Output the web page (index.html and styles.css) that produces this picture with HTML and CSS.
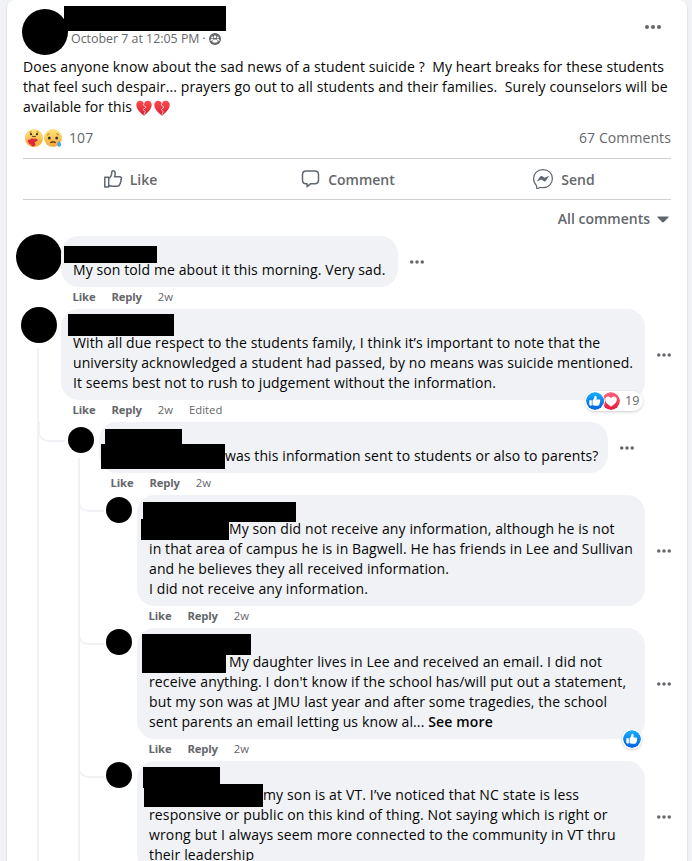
FILE: index.html
```html
<!DOCTYPE html>
<html lang="en">
<head>
  <meta charset="UTF-8">
  <meta name="viewport" content="width=device-width, initial-scale=1.0">
  <title>Group Post</title>
  <link rel="stylesheet" href="styles.css">
</head>
<body>
  <!-- shared icons -->
  <svg class="defs" width="0" height="0">
    <defs>
      <linearGradient id="blue" x1="0" y1="0" x2="0" y2="1">
        <stop offset="0" stop-color="#18afff"/>
        <stop offset="1" stop-color="#0062df"/>
      </linearGradient>
      <linearGradient id="red" x1="0" y1="0" x2="0" y2="1">
        <stop offset="0" stop-color="#ff6680"/>
        <stop offset="1" stop-color="#e61739"/>
      </linearGradient>
      <linearGradient id="heart" x1="0" y1="0" x2="0" y2="1">
        <stop offset="0" stop-color="#ff4a50"/>
        <stop offset="1" stop-color="#d8202f"/>
      </linearGradient>
      <linearGradient id="yellow" x1="0" y1="0" x2="0" y2="1">
        <stop offset="0" stop-color="#ffe67a"/>
        <stop offset="1" stop-color="#f5a73b"/>
      </linearGradient>
      <symbol id="dots" viewBox="0 0 16 4">
        <circle cx="2" cy="2" r="2"/><circle cx="8" cy="2" r="2"/><circle cx="14" cy="2" r="2"/>
      </symbol>
      <symbol id="like-badge" viewBox="0 0 18 18">
        <circle cx="9" cy="9" r="9" fill="url(#blue)"/>
        <path fill="#fff" d="M3.500 8.200h2.300v5.200H4.100c-.5 0-.8-.3-.8-.8V8.700c0-.3.1-.5.2-.5zM6.500 8.300c1.100-.6 1.600-1.600 1.800-2.800.1-1 .3-1.700 1-1.700 1 0 1.500 1 1.400 2.100 0 .6-.2 1.100-.3 1.500h2.700c.8 0 1.300.6 1.200 1.200 0 .3-.2.6-.4.8.4.5.3 1.200-.2 1.600.2.5 0 1-.4 1.300.1.800-.5 1.400-1.400 1.400H9.500c-1.300 0-2.100-.2-3-.7z"/>
      </symbol>
      <symbol id="love-badge" viewBox="0 0 18 18">
        <circle cx="9" cy="9" r="9" fill="url(#red)"/>
        <path fill="#fff" d="M9 14.700C5.200 12.200 3.200 10.300 3.200 7.600c0-1.800 1.300-3 2.900-3 1.300 0 2.300.8 2.900 1.800.6-1 1.600-1.800 2.900-1.800 1.600 0 2.900 1.200 2.900 3 0 2.700-2 4.600-5.800 7.100z"/>
      </symbol>
      <symbol id="broken-heart" viewBox="0 0 16 16">
        <path fill="url(#heart)" d="M7.700 3C6.800 1.300 5.300.5 3.700.7 1.500 1 .1 2.900.3 5.300.6 9.200 4 12.600 8 15.700c4-3.100 7.400-6.500 7.700-10.400.2-2.400-1.200-4.300-3.400-4.600C10.600.5 8.700 1.300 7.700 3z"/>
        <path fill="none" stroke="#ffe9ea" stroke-width=".8" d="M8.800 1.800 7.200 5l2.900 2.200-2.900 2.300 2 2L8 14.800"/>
      </symbol>
    </defs>
  </svg>

  <div class="card">
    <div class="post-header">
      <span class="avatar post-avatar"></span>
      <div class="post-info">
        <span class="name-bar"></span>
        <div class="date">
          <span>October 7 at 12:05 PM</span><span class="sep">·</span>
          <svg width="12" height="12" viewBox="0 0 12 12">
            <circle cx="6" cy="6" r="6" fill="#65676b"/>
            <g fill="#fff">
              <circle cx="3.200" cy="4.600" r="1"/><circle cx="8.800" cy="4.600" r="1"/><circle cx="6" cy="3.800" r="1.300"/>
              <path d="M1.300 7.800c0-1.300.8-1.900 1.900-1.900h5.600c1.100 0 1.900.6 1.900 1.900H8.900c0 1.200-1.200 1.900-2.900 1.900s-2.900-.7-2.900-1.900z"/>
            </g>
            <path d="M3.400 7.900c0-1.100 1-1.700 2.600-1.700s2.600.6 2.600 1.700" fill="none" stroke="#65676b" stroke-width=".7"/>
          </svg>
        </div>
      </div>
      <svg class="post-menu" width="16" height="4"><use href="#dots"/></svg>
    </div>

    <div class="post-text">
      <span class="line">Does anyone know about the sad news of a student suicide ?&nbsp; My heart breaks for these students</span>
      <span class="line">that feel such despair... prayers go out to all students and their families.&nbsp; Surely counselors will be</span>
      <span class="line">available for this <svg class="emoji" width="16" height="16"><use href="#broken-heart"/></svg><svg class="emoji" width="16" height="16"><use href="#broken-heart"/></svg></span>
    </div>

    <div class="stats">
      <svg width="37" height="18" viewBox="0 0 37 18">
        <circle cx="9" cy="9" r="9" fill="url(#yellow)"/>
        <path d="M4.500 3.300 6.500 2.600M11.500 2.600l2 .7" stroke="#a6601c" stroke-width=".9"/>
        <circle cx="6" cy="5.200" r="1.100" fill="#3c2b17"/><circle cx="12" cy="5.200" r="1.100" fill="#3c2b17"/>
        <path d="M7 7c1.300 1 2.700 1 4 0" fill="none" stroke="#4b280e" stroke-width=".9"/>
        <path fill="#dd2840" d="M8 17.600C5 16.800 3.100 14.700 2.700 12.600c-.3-1.700 1.200-2.700 2.600-1.900.8-1.600 2.300-1.700 3.100-.6 1.200-1 3-.8 3.900.2.700.9.300 1.700-.7 2.100l-2.200.8c.8.700 1.300 1.700.8 2.800-.4.900-1.200 1.500-2.200 1.600z"/>
        <path fill="#f7b63d" d="M.6 11.800c1.200-.5 2 .2 2.600 1.400.8 1.300 1.700 2.200 3 2.600l.3 1.700C3.600 16.700 1.300 14.900.6 11.800zM17.600 11.600c-1.200-.8-2.900-.6-4.500.3-1.100.7-2.200 1-3.200 1 .5.900 1.200 1.300 2.100 1.300-.2 1.300-.9 2.500-1.700 3.600 3.600-.6 6.200-2.900 7.300-6.200z"/>
        <circle cx="28" cy="9" r="9" fill="url(#yellow)"/>
        <path d="m22 6.200 2.600-1.700M31.400 4.500 34 6.200" stroke="#b27620" stroke-width="1"/>
        <ellipse cx="24.300" cy="9" rx="1.400" ry="1.600" fill="#30333a"/><ellipse cx="31.700" cy="9" rx="1.400" ry="1.600" fill="#30333a"/>
        <path d="M25.400 14c1.100-1.500 4.100-1.500 5.200 0" fill="none" stroke="#4b280e" stroke-width="1.200"/>
        <path fill="#41a8ea" d="M34.200 11.800c1 1.500 1.900 2.700 1.900 4a1.900 1.900 0 0 1-3.800 0c0-1.300.9-2.500 1.900-4z"/>
      </svg>
      <span class="count">107</span>
      <span class="comments-count">67 Comments</span>
    </div>

    <div class="buttons">
      <div class="button like">
        <svg width="20" height="20" viewBox="0 0 20 20" fill="none" stroke="#606770" stroke-width="1.500" stroke-linejoin="round">
          <path d="M1.800 8.200h3.900v9.700H1.800zM5.700 9.400C8.200 8 8.700 6.200 8.800 3.200c0-1 .4-1.500 1.200-1.500 1.500 0 2.200 1.400 2.200 3 0 1.100-.3 2.200-.7 3.100h5.200c1.400 0 2 1.100 1.700 2.200-.1.500-.4.800-.6 1 .4.700.3 1.700-.4 2.300.2.900-.2 1.600-.8 2-.1 1.400-.9 2-2.300 2h-4.500c-1.600 0-2.700-.4-4.100-1"/>
        </svg>
        <span>Like</span>
      </div>
      <div class="button reply-button">
        <svg width="20" height="20" viewBox="0 0 20 20" fill="none" stroke="#606770" stroke-width="1.500" stroke-linejoin="round">
          <path d="M5.200 2h8.600c2.500 0 3.700 1.300 3.700 3.700v5.200c0 2.500-1.200 3.800-3.700 3.800H9.700l-3.600 3v-3h-.9c-2.500 0-3.700-1.300-3.700-3.800V5.700C1.500 3.300 2.700 2 5.200 2z"/>
        </svg>
        <span>Comment</span>
      </div>
      <div class="button send">
        <svg width="20" height="20" viewBox="0 0 20 20" fill="none" stroke="#606770">
          <path d="M10 .6c5.500 0 9.400 3.900 9.400 9s-3.900 9.100-9.400 9.100c-1.100 0-2-.1-2.900-.4-.9.400-2.200 1.300-3.300 1.200-.5-.9.100-2.200-.4-3C1.600 14.800.6 12.500.6 9.600.6 4.500 4.500.6 10 .6z" stroke-width="1.200"/>
          <path d="m3.800 12.500 3.300-4.900c.6-.8 1.600-.9 2.300-.4l2.200 1.600 4.600-2-3.300 4.900c-.6.8-1.600.9-2.300.4l-2.200-1.600z" fill="#606770" stroke="none"/>
        </svg>
        <span>Send</span>
      </div>
    </div>

    <div class="sort">
      <span>All comments</span>
      <svg width="12" height="7" viewBox="0 0 12 7"><path d="M1 .5h10c.7 0 .9.6.4 1.100L7 6c-.6.600-1.400.600-2 0L.6 1.600C.1 1.100.3.500 1 .500z" fill="#606770"/></svg>
    </div>

    <div class="comments">
      <div class="comment">
        <span class="avatar avatar-xl"></span>
        <div class="body">
          <div class="row">
            <div class="bubble w337">
              <span class="bar bar-1"></span>
              <span class="line">My son told me about it this morning. Very sad.</span>
            </div>
            <svg class="menu" width="14" height="4"><use href="#dots"/></svg>
          </div>
          <div class="actions"><b>Like</b><b>Reply</b><span>2w</span></div>
        </div>
      </div>

      <div class="comment has-replies">
        <span class="avatar avatar-lg"></span>
        <div class="body">
          <div class="row">
            <div class="bubble w584">
              <span class="bar bar-2"></span>
              <span class="line">With all due respect to the students family, I think it’s important to note that the</span>
              <span class="line">university acknowledged a student had passed, by no means was suicide mentioned.</span>
              <span class="line">It seems best not to rush to judgement without the information.</span>
              <div class="reactions">
                <svg width="18" height="18"><use href="#like-badge"/></svg>
                <svg class="under" width="18" height="18"><use href="#love-badge"/></svg>
                <span>19</span>
              </div>
            </div>
            <svg class="menu" width="14" height="4"><use href="#dots"/></svg>
          </div>
          <div class="actions"><b>Like</b><b>Reply</b><span>2w</span><span>Edited</span></div>

          <div class="comment reply has-replies">
            <span class="avatar"></span>
            <div class="body">
              <div class="row">
                <div class="bubble w509">
                  <span class="bar bar-3a"></span><span class="bar bar-3b"></span>
                  <span class="line tag-3">was this information sent to students or also to parents?</span>
                </div>
                <svg class="menu" width="14" height="4"><use href="#dots"/></svg>
              </div>
              <div class="actions"><b>Like</b><b>Reply</b><span>2w</span></div>

              <div class="comment reply">
                <span class="avatar"></span>
                <div class="body">
                  <div class="row">
                    <div class="bubble w508">
                      <span class="bar bar-4a"></span><span class="bar bar-4b"></span>
                      <span class="line tag-4">My son did not receive any information, although he is not</span>
                      <span class="line">in that area of campus he is in Bagwell. He has friends in Lee and Sullivan</span>
                      <span class="line">and he believes they all received information.</span>
                      <span class="line">I did not receive any information.</span>
                    </div>
                    <svg class="menu" width="14" height="4"><use href="#dots"/></svg>
                  </div>
                  <div class="actions"><b>Like</b><b>Reply</b><span>2w</span></div>
                </div>
              </div>

              <div class="comment reply">
                <span class="avatar"></span>
                <div class="body">
                  <div class="row">
                    <div class="bubble w508 loose">
                      <span class="bar bar-5a"></span><span class="bar bar-5b"></span>
                      <span class="line tag-4">My daughter lives in Lee and received an email. I did not</span>
                      <span class="line">receive anything. I don't know if the school has/will put out a statement,</span>
                      <span class="line">but my son was at JMU last year and after some tragedies, the school</span>
                      <span class="line">sent parents an email letting us know al... <b>See more</b></span>
                      <div class="reactions single">
                        <svg width="18" height="18"><use href="#like-badge"/></svg>
                      </div>
                    </div>
                    <svg class="menu" width="14" height="4"><use href="#dots"/></svg>
                  </div>
                  <div class="actions"><b>Like</b><b>Reply</b><span>2w</span></div>
                </div>
              </div>

              <div class="comment reply">
                <span class="avatar"></span>
                <div class="body">
                  <div class="row">
                    <div class="bubble w508 loose">
                      <span class="bar bar-6a"></span><span class="bar bar-6b"></span>
                      <span class="line tag-6">my son is at VT. I’ve noticed that NC state is less</span>
                      <span class="line">responsive or public on this kind of thing. Not saying which is right or</span>
                      <span class="line">wrong but I always seem more connected to the community in VT thru</span>
                      <span class="line">their leadership</span>
                    </div>
                    <svg class="menu" width="14" height="4"><use href="#dots"/></svg>
                  </div>
                </div>
              </div>
            </div>
          </div>
        </div>
      </div>
    </div>
  </div>
</body>
</html>
```
FILE: styles.css
```css
* {
  box-sizing: border-box;
}
html, body {
  height: 861px;
  overflow: hidden;
}
body {
  margin: 0;
  background: #f0f2f5;
  font-family: "Open Sans", "Noto Sans", sans-serif;
  font-size: 14px;
  line-height: 20px;
  color: #050505;
}
svg {
  display: block;
  flex-shrink: 0;
}
.defs {
  position: absolute;
}
.card {
  width: 680px;
  height: 861px;
  margin-left: 7px;
  padding: 6px 16px 0;
  background: #fff;
  border-radius: 8px 8px 0 0;
  box-shadow: 0 1px 2px rgba(0,0,0,0.2);
}
.line {
  display: block;
  white-space: nowrap;
  letter-spacing: 0.1px;
}
.loose .line {
  letter-spacing: 0.135px;
}
b {
  font-weight: 600;
}

/* post */
.post-header {
  display: flex;
  height: 51px;
}
.avatar {
  flex-shrink: 0;
  width: 26px;
  height: 26px;
  border-radius: 50%;
  background: #000;
}
.post-avatar {
  width: 46px;
  height: 46px;
  margin: 3px 0 0 -1px;
}
.post-info {
  flex: 1;
  margin-left: -4px;
}
.name-bar {
  display: block;
  width: 162px;
  height: 25px;
  background: #000;
}
.date {
  display: flex;
  align-items: center;
  height: 16px;
  padding-left: 7px;
  font-size: 12.4px;
  color: #65676b;
}
.sep {
  width: 9px;
  text-align: center;
}
.post-menu {
  margin: 19px 10px 0 0;
  fill: #65676b;
}
.post-text {
  height: 60px;
}
.emoji {
  display: inline-block;
  vertical-align: -4px;
  margin-right: 2px;
}
.stats {
  display: flex;
  align-items: center;
  height: 41px;
  padding-left: 2px;
  letter-spacing: 0.1px;
  color: #65676b;
}
.count {
  margin-left: 7px;
}
.comments-count {
  margin-left: auto;
}
.buttons {
  display: flex;
  height: 42px;
  border-top: 1px solid #ced0d4;
  border-bottom: 1px solid #ced0d4;
}
.button {
  flex: 1;
  display: flex;
  align-items: center;
  justify-content: center;
  gap: 7px;
  padding-top: 1px;
  font-weight: 600;
  color: #65676b;
}
.like {
  padding-right: 4px;
}
.reply-button {
  padding-right: 2px;
}
.send {
  gap: 8px;
}
.button svg {
  margin-top: -1px;
}
.sort {
  display: flex;
  align-items: center;
  justify-content: flex-end;
  gap: 7px;
  height: 36px;
  padding: 2px 2px 0 0;
  font-weight: 600;
  color: #65676b;
}

/* comments */
.comment {
  display: flex;
  position: relative;
}
.body {
  flex: 1;
  min-width: 0;
}
.row {
  display: flex;
  align-items: center;
}
.comments > .comment > .body {
  margin-left: 4px;
}
.avatar-xl {
  width: 46px;
  height: 46px;
  margin: -2px -5px 0 -7px;
}
.avatar-lg {
  width: 36px;
  height: 36px;
  margin: -2px 0 0 -2px;
}
.bubble {
  position: relative;
  padding: 24px 12px 7px;
  background: #f0f2f5;
  border-radius: 18px;
}
.w337 { width: 337px; }
.w584 { width: 584px; }
.w509 { width: 509px; }
.w508 { width: 508px; }
.menu {
  margin-left: 12px;
  fill: #65676b;
}
.actions {
  display: flex;
  gap: 16px;
  height: 22px;
  padding-left: 11.5px;
  font-size: 11.3px;
  color: #65676b;
}
.actions b {
  font-weight: 700;
  letter-spacing: -0.15px;
}

/* covered names */
.bar {
  position: absolute;
  background: #000;
}
.bar-1 { left: 3px; top: 10px; width: 93px; height: 17px; }
.bar-2 { left: 7px; top: 5px; width: 106px; height: 22px; }
.bar-3a { left: 6px; top: 7px; width: 77px; height: 16px; }
.bar-3b { left: 2px; top: 22px; width: 124px; height: 25px; }
.bar-4a { left: 6px; top: 7px; width: 153px; height: 20px; }
.bar-4b { left: 4px; top: 24px; width: 88px; height: 21px; }
.bar-5a { left: 5px; top: 6px; width: 109px; height: 21px; }
.bar-5b { left: 5px; top: 26px; width: 84px; height: 19px; }
.bar-6a { left: 6px; top: 6px; width: 77px; height: 21px; }
.bar-6b { left: 7px; top: 23px; width: 119px; height: 23px; }
.tag-3 { padding-left: 114px; }
.tag-4 { padding-left: 80px; }
.tag-6 { padding-left: 114px; }

/* replies and thread lines */
.reply {
  margin-left: 7px;
}
.reply > .avatar {
  margin-top: 5px;
}
.reply > .body {
  margin-left: 5px;
}
.reply .reply > .avatar {
  margin-top: 1px;
}
.reply .actions + .reply > .avatar {
  margin-top: 2px;
}
.has-replies::before {
  content: "";
  position: absolute;
  left: 14px;
  top: 39px;
  width: 2px;
  height: 900px;
  background: #f0f2f5;
}
.reply.has-replies::before {
  left: 10px;
  top: 36px;
}
.reply::after {
  content: "";
  position: absolute;
  left: -30px;
  top: 0;
  width: 25px;
  height: 18px;
  border-left: 2px solid #f0f2f5;
  border-bottom: 2px solid #f0f2f5;
  border-bottom-left-radius: 10px;
}
.reply .reply::after {
  left: -28px;
  width: 24px;
  height: 15px;
}

/* reaction pills */
.reactions {
  position: absolute;
  right: 2px;
  bottom: -11px;
  display: flex;
  align-items: center;
  width: 58px;
  height: 20px;
  padding: 0 2px 0 1px;
  background: #fff;
  border-radius: 10px;
  box-shadow: 0 1px 3px rgba(0,0,0,0.2);
  font-size: 12.5px;
  color: #65676b;
}
.reactions svg {
  position: relative;
  z-index: 1;
  border-radius: 50%;
  box-shadow: 0 0 0 1px #fff;
}
.reactions .under {
  z-index: 0;
  margin-left: -2px;
}
.reactions span {
  margin-left: 5px;
}
.reactions.single {
  right: 3px;
  bottom: -10px;
  width: 20px;
}
```
